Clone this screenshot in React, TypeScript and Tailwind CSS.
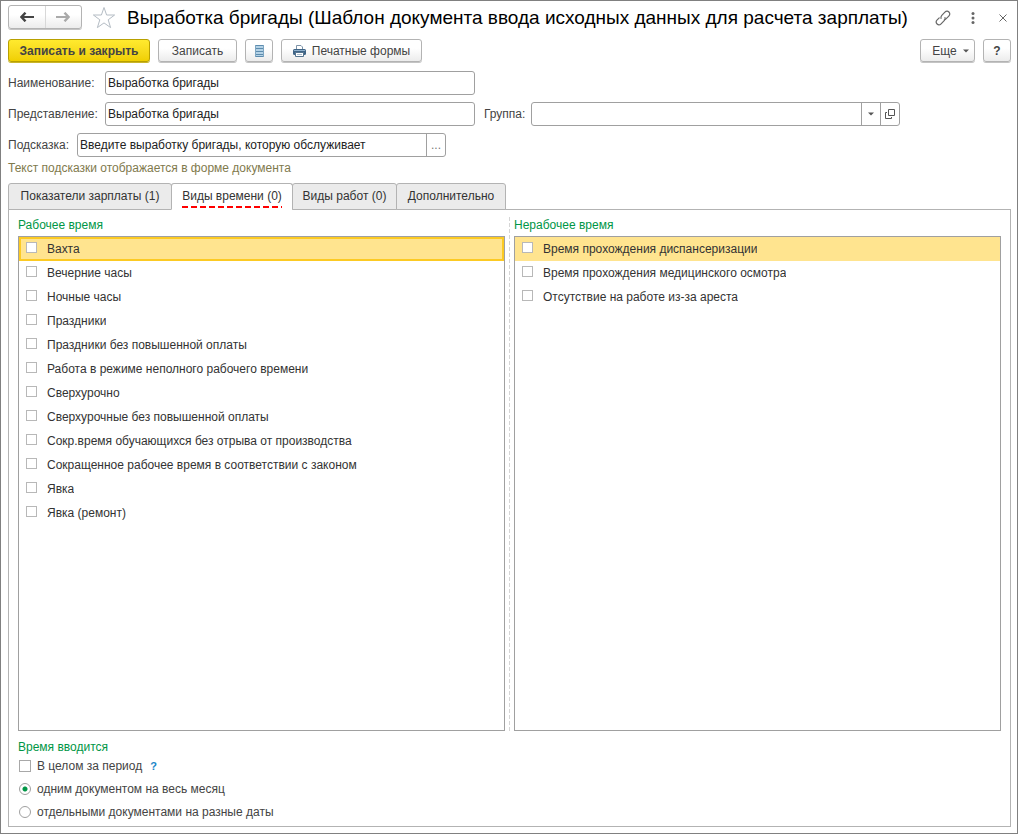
import { useState } from 'react';
import type { ReactNode } from 'react';
import clsx from 'clsx';

const workTime = [
  'Вахта',
  'Вечерние часы',
  'Ночные часы',
  'Праздники',
  'Праздники без повышенной оплаты',
  'Работа в режиме неполного рабочего времени',
  'Сверхурочно',
  'Сверхурочные без повышенной оплаты',
  'Сокр.время обучающихся без отрыва от производства',
  'Сокращенное рабочее время в соответствии с законом',
  'Явка',
  'Явка (ремонт)',
];

const offTime = [
  'Время прохождения диспансеризации',
  'Время прохождения медицинского осмотра',
  'Отсутствие на работе из-за ареста',
];

const tabs = [
  { title: 'Показатели зарплаты (1)', width: 'w-[164px]' },
  { title: 'Виды времени (0)', width: 'w-[122px]' },
  { title: 'Виды работ (0)', width: 'w-[105px]' },
  { title: 'Дополнительно', width: 'w-[110px]' },
];

function ArrowIcon({ className }: { className?: string }) {
  return (
    <svg viewBox="0 0 14 10" className={clsx('h-[10px] w-[14px]', className)} fill="none" stroke="currentColor" strokeWidth="2">
      <path d="M2 5H14" />
      <path d="M5.500 .7 1.500 5 5.500 9.300" strokeWidth="2.400" />
    </svg>
  );
}

function StarIcon() {
  return (
    <svg viewBox="0 0 24 24" className="h-6 w-6" fill="none" stroke="#b4bcc4">
      <path d="M12 1.5 14.6 9H22.6L16.2 13.8 18.6 21.6 12 16.9 5.4 21.6 7.8 13.8 1.4 9H9.4Z" />
    </svg>
  );
}

function LinkIcon() {
  return (
    <svg viewBox="0 0 16 16" className="h-4 w-4" fill="none" stroke="#666" strokeWidth="1.2" strokeLinecap="round">
      <path d="M6 8.400C5.700 7.300 6 6.300 6.800 5.400L9.900 2.200C11.200 .9 12.800 .9 13.900 2C15.100 3.200 15.100 4.800 13.800 6.100L10.700 9.200C10.200 9.700 9.700 9.900 9.200 10" />
      <path d="M10 7.600C10.300 8.700 10 9.700 9.200 10.600L6.100 13.800C4.800 15.100 3.200 15.100 2.100 14C.9 12.800 .9 11.200 2.200 9.900L4.200 7.900" />
    </svg>
  );
}

function ListIcon() {
  return (
    <svg viewBox="0 0 9 12" className="h-3 w-[9px]">
      <path fill="#b4d2e6" d="M0 0h9v12H0z" />
      <path fill="#5d8cae" d="M0 0h9v1H0zM0 3h9v1H0zM0 6h9v1H0zM0 9h9v1H0zM0 11h9v1H0z" />
      <path fill="#7ea6c2" d="M0 0h1v12H0zM8 0h1v12H8z" />
    </svg>
  );
}

function PrinterIcon() {
  return (
    <svg viewBox="0 0 13 12" className="h-3 w-[13px]">
      <path fill="#fff" stroke="#7d93a8" d="M3.500 4.500V.5H8L9.500 2V4.500" />
      <rect y="4" width="13" height="6" rx="1.500" fill="#3f6486" />
      <path fill="#8fb0cc" d="M1 5h11v1H1z" />
      <path fill="#fff" stroke="#55748f" d="M2.500 7.500h8v4h-8z" />
      <path fill="#a9bccd" d="M4 9h5v1H4z" />
    </svg>
  );
}

function OpenIcon() {
  return (
    <svg viewBox="0 0 10 10" className="h-[10px] w-[10px]" fill="none" stroke="#555">
      <path d="M3.500 .5h6v6h-6z" />
      <path d="M2 3.500H.5v6h6V8" />
    </svg>
  );
}

function CaretIcon() {
  return (
    <svg viewBox="0 0 6 4" className="h-1 w-[6px]" fill="#555">
      <path d="M0 .5h6L3 3.500z" />
    </svg>
  );
}

function ToolButton({ children, label, className }: { children: ReactNode; label?: string; className?: string }) {
  return (
    <button
      type="button"
      aria-label={label}
      className={clsx(
        'flex h-[23px] items-center justify-center rounded-[3px] border border-[#b3b3b3] bg-linear-to-b from-white from-40% to-[#ececec] text-[#444] shadow-[0_1px_0_#c4c4c4]',
        className,
      )}
    >
      {children}
    </button>
  );
}

function TimeList({ title, items, focused }: { title: string; items: string[]; focused?: boolean }) {
  return (
    <section className="flex min-w-0 flex-1 flex-col">
      <h2 className="mb-[3px] leading-4 text-[#009646]">{title}</h2>
      <ul className="flex-1 border border-[#a0a0a0]">
        {items.map((item, i) => (
          <li
            key={item}
            className={clsx(i === 0 && 'bg-[#ffe48f]', i === 0 && focused && 'outline-2 -outline-offset-2 outline-[#fcca23]')}
          >
            <label className="flex h-6 items-center pl-[7px] text-[#333]">
              <input type="checkbox" className="mr-[10px] mb-[3px] h-[11px] w-[11px] appearance-none border border-[#b8b8b8] bg-white checked:bg-[#009646]" />
              <span className="truncate">{item}</span>
            </label>
          </li>
        ))}
      </ul>
    </section>
  );
}

export default function App() {
  const [activeTab, setActiveTab] = useState(1);
  const [mode, setMode] = useState('single');

  return (
    <main className="flex min-h-screen flex-col border border-[#808080] bg-white pt-1 pr-[6px] pb-[6px] pl-[7px] font-['Liberation_Sans',Arial,sans-serif] text-[12px] text-[#444]">
      <header className="flex h-[25px] items-center">
        <div className="flex h-6 w-[74px] shrink-0 self-start rounded-[3px] border border-[#b3b3b3] bg-linear-to-b from-white from-40% to-[#ececec] shadow-[0_1px_0_#c4c4c4]">
          <button type="button" aria-label="Назад" className="flex flex-1 items-center justify-center border-r border-[#d8d8d8] text-[#444]">
            <ArrowIcon />
          </button>
          <button type="button" aria-label="Вперед" className="flex flex-1 items-center justify-center text-[#aaa]">
            <ArrowIcon className="rotate-180" />
          </button>
        </div>
        <button type="button" aria-label="В избранное" className="ml-[10px]">
          <StarIcon />
        </button>
        <h1 className="ml-[11px] truncate text-[19px] leading-6 text-black">
          Выработка бригады (Шаблон документа ввода исходных данных для расчета зарплаты)
        </h1>
        <div className="ml-auto flex items-center">
          <button type="button" aria-label="Получить ссылку">
            <LinkIcon />
          </button>
          <button type="button" aria-label="Действия" className="ml-5">
            <svg viewBox="0 0 4 12" className="h-3 w-1" fill="#666">
              <circle cx="2" cy="1.500" r="1.500" />
              <circle cx="2" cy="6" r="1.500" />
              <circle cx="2" cy="10.500" r="1.500" />
            </svg>
          </button>
          <button type="button" aria-label="Закрыть" className="mr-1 ml-6">
            <svg viewBox="0 0 8 8" className="h-2 w-2" stroke="#666">
              <path d="M.5 .5l7 7M7.500 .5l-7 7" />
            </svg>
          </button>
        </div>
      </header>

      {/* Command bar */}
      <div className="mt-[9px] flex gap-2 pb-px">
        <button
          type="button"
          className="h-[23px] w-[142px] rounded-[3px] border border-[#b8a000] bg-linear-to-b from-[#ffea2e] to-[#f0cf00] font-bold text-[#444] shadow-[0_1px_0_#c9b52a]"
        >
          Записать и закрыть
        </button>
        <ToolButton className="w-[79px]">Записать</ToolButton>
        <ToolButton className="w-7" label="Список">
          <ListIcon />
        </ToolButton>
        <ToolButton className="w-[141px] gap-[6px]">
          <PrinterIcon />
          Печатные формы
        </ToolButton>
        <ToolButton className="ml-auto w-[55px] gap-[6px] pl-[6px]">
          Еще
          <CaretIcon />
        </ToolButton>
        <ToolButton className="w-7 font-bold">?</ToolButton>
      </div>

      {/* Attributes */}
      <div className="mt-2 flex flex-col gap-[7px]">
        <div className="flex items-center">
          <label htmlFor="name" className="w-[97px] shrink-0">Наименование:</label>
          <input id="name" defaultValue="Выработка бригады" className="h-6 w-[370px] rounded-[3px] border border-[#a0a0a0] px-[2px] text-[#222]" />
        </div>
        <div className="flex items-center">
          <label htmlFor="view" className="w-[97px] shrink-0">Представление:</label>
          <input id="view" defaultValue="Выработка бригады" className="h-6 w-[370px] rounded-[3px] border border-[#a0a0a0] px-[2px] text-[#222]" />
          <label htmlFor="group" className="ml-[9px] w-[47px] shrink-0">Группа:</label>
          <div className="flex h-6 w-[369px] rounded-[3px] border border-[#a0a0a0]">
            <input id="group" className="min-w-0 flex-1 px-[2px] text-[#222]" />
            <button type="button" aria-label="Выбрать" className="flex w-[19px] items-center justify-center border-l border-[#a0a0a0]">
              <CaretIcon />
            </button>
            <button type="button" aria-label="Открыть" className="flex w-[19px] items-center justify-center border-l border-[#a0a0a0]">
              <OpenIcon />
            </button>
          </div>
        </div>
        <div className="flex items-center">
          <label htmlFor="hint" className="w-[69px] shrink-0">Подсказка:</label>
          <div className="flex h-6 w-[369px] rounded-[3px] border border-[#a0a0a0]">
            <input id="hint" defaultValue="Введите выработку бригады, которую обслуживает" className="min-w-0 flex-1 px-[2px] text-[#222]" />
            <button type="button" className="w-[19px] border-l border-[#a0a0a0] text-[#777]">...</button>
          </div>
        </div>
      </div>
      <p className="mt-[3px] leading-4 text-[#7f7a4d]">Текст подсказки отображается в форме документа</p>

      <div role="tablist" className="z-10 mt-[7px] -mb-px flex">
        {tabs.map((tab, i) => (
          <button
            key={tab.title}
            type="button"
            role="tab"
            aria-selected={i === activeTab}
            onClick={() => setActiveTab(i)}
            className={clsx(
              'h-[27px] rounded-t-[3px] border border-[#b3b3b3] pb-[2px] text-[#333]',
              tab.width,
              i > 0 && '-ml-px',
              i === activeTab ? 'border-b-white bg-white' : 'bg-[#ebebeb]',
            )}
          >
            <span className="relative">
              {tab.title}
              {i === activeTab && (
                <span className="absolute inset-x-0 -bottom-[5px] h-[2px] bg-[repeating-linear-gradient(90deg,#f00_0_6px,transparent_6px_9px)]" />
              )}
            </span>
          </button>
        ))}
      </div>

      <div role="tabpanel" className="flex flex-1 flex-col border border-[#b3b3b3] px-[9px] pt-[7px] pb-[6px]">
        <div className="flex flex-1">
          <TimeList title="Рабочее время" items={workTime} focused />
          <div className="mx-1 w-px bg-[repeating-linear-gradient(180deg,#d5d5d5_0_4px,transparent_4px_6px)]" />
          <TimeList title="Нерабочее время" items={offTime} />
        </div>

        <fieldset className="mt-2">
          <legend className="leading-4 text-[#009646]">Время вводится</legend>
          <div className="mt-[3px] flex h-4 items-center">
            <label className="flex items-center">
              <input type="checkbox" className="mr-[6px] ml-px h-3 w-3 appearance-none border border-[#a8a8a8] bg-white checked:bg-[#009646]" />
              В целом за период
            </label>
            <button type="button" className="ml-2 text-[11px] font-bold text-[#1a86c8]">?</button>
          </div>
          {[
            { id: 'single', text: 'одним документом на весь месяц' },
            { id: 'separate', text: 'отдельными документами на разные даты' },
          ].map((option) => (
            <label key={option.id} className="mt-[7px] flex h-4 items-center">
              <input
                type="radio"
                name="mode"
                checked={mode === option.id}
                onChange={() => setMode(option.id)}
                className="mr-[6px] ml-px h-3 w-3 appearance-none rounded-full border border-[#a0a0a0] bg-white checked:bg-[radial-gradient(circle,#009646_2px,transparent_3px)]"
              />
              {option.text}
            </label>
          ))}
        </fieldset>
      </div>
    </main>
  );
}
